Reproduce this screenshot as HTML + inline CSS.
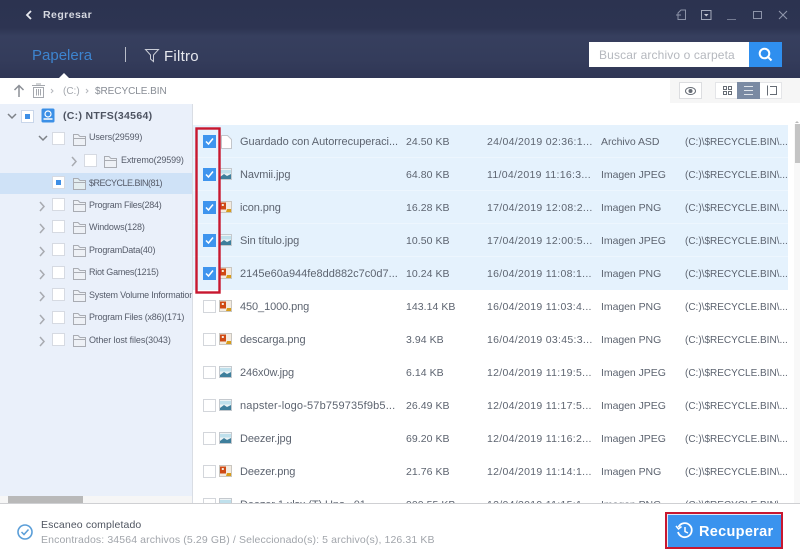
<!DOCTYPE html>
<html lang="es"><head><meta charset="utf-8"><title>Papelera</title>
<style>
html,body{margin:0;padding:0}
body{width:800px;height:556px;overflow:hidden;background:#fff;position:relative;font-family:"Liberation Sans",sans-serif;font-size:11px;color:#5d6470}
.a{position:absolute;white-space:nowrap}
svg{position:absolute;overflow:visible}
.t{position:absolute;white-space:nowrap;line-height:14px;filter:blur(.25px)}
.n{left:240px;letter-spacing:-.1px}
.s{left:406px;font-size:10.5px;letter-spacing:.05px}
.d{left:487px;font-size:10.5px;letter-spacing:.3px}
.k{left:601px;font-size:10.5px;letter-spacing:-.05px}
.p{left:685px;font-size:10px;letter-spacing:0;margin-top:1px}
.row{position:absolute;left:193px;width:595px;height:32px}
.sel{background:#e5f2fd}
.cb{position:absolute;width:11px;height:11px;border:1px solid #d3d6db;background:#fff}
.ck{position:absolute;left:203px;width:13px;height:13px;background:#3d94ee}
.tc{position:absolute;width:11px;height:11px;border:1px solid #d6dae2;background:#fff}
.tt{position:absolute;white-space:nowrap;font-size:9px;line-height:13px;color:#565c6a;letter-spacing:-.18px;filter:blur(.2px)}
</style></head><body>

<div class="a" style="left:0;top:0;width:800px;height:78px;background:linear-gradient(#2c3350 0,#2d3452 28px,#363f5e 36px,#343c5b 60px,#2f3655 78px)"></div>
<svg style="left:0;top:0" width="800" height="78" fill="none" stroke="#cfd3dc" stroke-width="1.2">
<path d="M31 11 L27 15 L31 19" stroke="#e8eaf0" stroke-width="1.8"/>
<path d="M125.500 47 V62" stroke="#b9bdc9" stroke-width="1"/>
<path d="M145.500 49.500 H158.500 L153.500 55 V61.500 L150.500 59 V55 Z" stroke="#c9ccd6" stroke-width="1"/>
<path d="M59 78 L64 73 L69 78 Z" fill="#fff" stroke="none"/>
<path d="M678 13 L681 10 H685.500 V19.500 H678 Z M676 15 H681" stroke="#8c93a8" stroke-width="1"/>
<path d="M701.500 10.500 H711 V19.500 H701.500 Z" stroke="#a2a8b9" stroke-width="1"/>
<path d="M704 14 H708.500 L706.250 16.500 Z" fill="#c7cad5" stroke="none"/>
<path d="M727 19.500 H736" stroke="#747b92" stroke-width="1"/>
<path d="M753.500 11.500 H761.500 V18.500 H753.500 Z" stroke="#8c93a8" stroke-width="1"/>
<path d="M779 11 L787 19 M787 11 L779 19" stroke="#8f96ab" stroke-width="1.1"/>
</svg>
<div class="t" style="left:43px;top:8px;font-size:10.500px;font-weight:bold;color:#d6d9e1;letter-spacing:.45px">Regresar</div>
<div class="t" style="left:32px;top:47px;font-size:15px;line-height:18px;color:#3d84cf;letter-spacing:0">Papelera</div>
<div class="t" style="left:164px;top:48px;font-size:15px;line-height:18px;color:#e6e8ee;letter-spacing:.25px">Filtro</div>
<div class="a" style="left:589px;top:42px;width:160px;height:25px;background:#fff"></div>
<div class="t" style="left:599px;top:48px;font-size:12px;color:#b5b8be;letter-spacing:.13px">Buscar archivo o carpeta</div>
<div class="a" style="left:749px;top:42px;width:33px;height:25px;background:#2f8fef"></div>
<svg style="left:749px;top:42px" width="33" height="25" fill="none" stroke="#fff" stroke-width="2"><circle cx="15.500" cy="11.500" r="4.800"/><path d="M19 15 L22.500 18.500"/></svg>

<!-- toolbar -->
<div class="a" style="left:670px;top:78px;width:130px;height:25px;background:#f6f6f6"></div>
<svg style="left:0;top:78px" width="200" height="26" fill="none" stroke="#8b8f96">
<path d="M19 19 V8 M14.500 12 L19 7.500 L23.500 12" stroke-width="1.500"/>
<path d="M33.500 9.500 H43.500 V19.500 H33.500 Z M32 7.500 H45 M36 6 H41 M36.500 11 V17.500 M38.500 11 V17.500 M40.500 11 V17.500" stroke="#a5a8ae" stroke-width="1"/>
<path d="M51 11 L53 13 L51 15 M86 11 L88 13 L86 15" stroke="#b5b8bd" stroke-width="1"/>
</svg>
<div class="t" style="left:63px;top:85px;font-size:10px;color:#a3a7ad">(C:)</div>
<div class="t" style="left:95px;top:85px;font-size:10px;color:#878c94;letter-spacing:-.05px">$RECYCLE.BIN</div>
<div class="a" style="left:679px;top:82px;background:#fff;border:1px solid #dcdde0;box-sizing:content-box;width:21px;height:15px"></div>
<div class="a" style="left:715px;top:82px;width:67px;height:17px;background:#fff;border:1px solid #e4e5e8;box-sizing:border-box"></div>
<div class="a" style="left:737px;top:82px;width:23px;height:17px;background:#7a8aa3"></div>
<svg style="left:670px;top:78px" width="130" height="25" fill="none" stroke="#666c75" stroke-width="1">
<ellipse cx="20.500" cy="13" rx="5" ry="3.500"/><circle cx="20.500" cy="13" r="1.500" fill="#666c75"/>
<path d="M53.500 8.500 H56.500 V11.500 H53.500 Z M58.500 8.500 H61.500 V11.500 H58.500 Z M53.500 13.500 H56.500 V16.500 H53.500 Z M58.500 13.500 H61.500 V16.500 H58.500 Z"/>
<path d="M74 8.500 H83 M74 12.500 H83 M74 16.500 H83" stroke="#dfe4ea"/>
<path d="M97.500 7.500 V17.500 M100 8.500 H106.500 V16.500 H100"/>
</svg>
<svg style="left:794px;top:118px" width="6" height="6"><path d="M1 5 L3 3 L5 5Z" fill="#b9b9b9"/></svg>

<!-- left tree -->
<div class="a" style="left:0;top:104px;width:192px;height:392px;background:#eaf0fa"></div>
<div class="a" style="left:192px;top:104px;width:1px;height:399px;background:#d9dde4"></div>
<div class="a" style="left:0;top:173px;width:192px;height:21px;background:#cfe2f7"></div>

<div class="tc" style="left:21px;top:110px;border-color:#c9d6ea"></div><div class="a" style="left:25px;top:114px;width:5px;height:5px;background:#3d8ee6"></div>
<div class="tc" style="left:52px;top:132px"></div>
<div class="tc" style="left:84px;top:154px"></div>
<div class="tc" style="left:52px;top:176px"></div><div class="a" style="left:56px;top:180px;width:5px;height:5px;background:#3d8ee6"></div>
<div class="tc" style="left:52px;top:198px"></div>
<div class="tc" style="left:52px;top:220px"></div>
<div class="tc" style="left:52px;top:243px"></div>
<div class="tc" style="left:52px;top:266px"></div>
<div class="tc" style="left:52px;top:288px"></div>
<div class="tc" style="left:52px;top:311px"></div>
<div class="tc" style="left:52px;top:333px"></div>

<svg style="left:0;top:0" width="193" height="360" fill="none" stroke="#7d8187" stroke-width="1.500">
<path d="M8 114 L12 118 L16 114 M39 136 L43 140 L47 136"/>
<g stroke="#a8abb1"><path d="M72 157 L76 161.500 L72 166"/>
<path d="M40 202 L44 206.500 L40 211 M40 224 L44 228.500 L40 233 M40 247 L44 251.500 L40 256 M40 270 L44 274.500 L40 279 M40 292 L44 296.500 L40 301 M40 315 L44 319.500 L40 324 M40 337 L44 341.500 L40 346"/></g>
<defs><g id="fd"><path d="M.5 12.500 V1.500 H5 L7 3.500 H12.500 V12.500 Z M.5 5.500 H12.500" stroke="#a9acb3" stroke-width="1"/></g></defs>
<use href="#fd" x="73" y="133" fill="#eef1f6"/>
<use href="#fd" x="104" y="155" fill="#eef1f6"/>
<use href="#fd" x="73" y="177" fill="#e3edf0"/>
<use href="#fd" x="73" y="199" fill="#eef1f6"/>
<use href="#fd" x="73" y="221" fill="#eef1f6"/>
<use href="#fd" x="73" y="244" fill="#eef1f6"/>
<use href="#fd" x="73" y="267" fill="#eef1f6"/>
<use href="#fd" x="73" y="289" fill="#eef1f6"/>
<use href="#fd" x="73" y="312" fill="#eef1f6"/>
<use href="#fd" x="73" y="334" fill="#eef1f6"/>
</svg>
<svg style="left:41px;top:108px" width="15" height="16" fill="none"><rect x="0.500" y="0.500" width="13" height="14" rx="1.500" fill="#3b8fe6"/><circle cx="7" cy="6" r="3" stroke="#fff" stroke-width="1.200"/><path d="M2.500 11 H11.500" stroke="#fff" stroke-width="1.500"/></svg>
<div class="tt" style="left:63px;top:110px;font-weight:bold;color:#4d5361;font-size:10.500px;letter-spacing:.3px">(C:) NTFS(34564)</div>
<div class="tt" style="left:89px;top:131px;letter-spacing:-.1px">Users(29599)</div>
<div class="tt" style="left:121px;top:154px;letter-spacing:-.13px">Extremo(29599)</div>
<div class="tt" style="left:89px;top:177px;letter-spacing:-.5px">$RECYCLE.BIN(81)</div>
<div class="tt" style="left:89px;top:199px;letter-spacing:-.25px">Program Files(284)</div>
<div class="tt" style="left:89px;top:221px;letter-spacing:-.15px">Windows(128)</div>
<div class="tt" style="left:89px;top:244px;letter-spacing:-.22px">ProgramData(40)</div>
<div class="tt" style="left:89px;top:266px;letter-spacing:-.24px">Riot Games(1215)</div>
<div class="tt" style="left:89px;top:289px;width:103px;overflow:hidden;letter-spacing:-.2px">System Volume Information</div>
<div class="tt" style="left:89px;top:311px;letter-spacing:-.2px">Program Files (x86)(171)</div>
<div class="tt" style="left:89px;top:334px;letter-spacing:-.08px">Other lost files(3043)</div>

<!-- list rows -->
<div class="row sel" style="top:125px;height:165px"></div>
<div class="a" style="left:193px;top:157px;width:595px;height:1px;background:#edf6fe"></div>
<div class="a" style="left:193px;top:190px;width:595px;height:1px;background:#edf6fe"></div>
<div class="a" style="left:193px;top:223px;width:595px;height:1px;background:#edf6fe"></div>
<div class="a" style="left:193px;top:256px;width:595px;height:1px;background:#edf6fe"></div>

<div class="ck" style="top:135px"></div><div class="ck" style="top:168px"></div><div class="ck" style="top:201px"></div><div class="ck" style="top:234px"></div><div class="ck" style="top:267px"></div>
<svg style="left:0;top:0" width="800" height="556" fill="none">
<g stroke="#fff" stroke-width="1.500"><path d="M206 141.500 L208.500 144 L213 138.500"/><path d="M206 174.500 L208.500 177 L213 171.500"/><path d="M206 207.500 L208.500 210 L213 204.500"/><path d="M206 240.500 L208.500 243 L213 237.500"/><path d="M206 273.500 L208.500 276 L213 270.500"/></g>
<path d="M221.500 135.500 H227.500 L231.500 139.500 V148.500 H221.500 Z" stroke="#c3c6cb" fill="#fff"/>
<defs>
<g id="jp"><rect x=".5" y=".5" width="12" height="11" fill="#eef3f5" stroke="#c4c9ce"/><path d="M1 9 L5 6 L8 8 L12 6 V11 H1 Z" fill="#3e7f9c"/><rect x="1" y="2" width="11" height="3.500" fill="#bfe0ec"/></g>
<g id="pn"><rect x=".5" y=".5" width="12" height="11" fill="#f3ebe0" stroke="#c9c6c0"/><rect x="1" y="1.500" width="6" height="7" fill="#cf4a14"/><rect x="2.800" y="3" width="2" height="2" fill="#f3ebe0"/><path d="M8 8 L12 8 L12 11 L7 11 Z" fill="#d89c1a"/></g>
</defs>
<use href="#jp" x="219" y="168"/>
<use href="#pn" x="219" y="201"/>
<use href="#jp" x="219" y="234"/>
<use href="#pn" x="219" y="267"/>
<use href="#pn" x="219" y="300"/>
<use href="#pn" x="219" y="333"/>
<use href="#jp" x="219" y="366"/>
<use href="#jp" x="219" y="399"/>
<use href="#jp" x="219" y="432"/>
<use href="#pn" x="219" y="465"/>
<use href="#jp" x="219" y="498"/>
<rect x="196.500" y="128.500" width="23" height="164" stroke="#c8172f" stroke-width="2.400"/>
</svg>

<div class="cb" style="left:203px;top:300px"></div>
<div class="cb" style="left:203px;top:333px"></div>
<div class="cb" style="left:203px;top:366px"></div>
<div class="cb" style="left:203px;top:399px"></div>
<div class="cb" style="left:203px;top:432px"></div>
<div class="cb" style="left:203px;top:465px"></div>
<div class="cb" style="left:203px;top:498px"></div>

<div class="t n" style="top:135px;letter-spacing:-.03px">Guardado con Autorrecuperaci...</div><div class="t s" style="top:135px">24.50 KB</div><div class="t d" style="top:135px">24/04/2019 02:36:1...</div><div class="t k" style="top:135px">Archivo ASD</div><div class="t p" style="top:135px">(C:)\$RECYCLE.BIN\...</div>
<div class="t n" style="top:168px">Navmii.jpg</div><div class="t s" style="top:168px">64.80 KB</div><div class="t d" style="top:168px">11/04/2019 11:16:3...</div><div class="t k" style="top:168px">Imagen JPEG</div><div class="t p" style="top:168px">(C:)\$RECYCLE.BIN\...</div>
<div class="t n" style="top:201px">icon.png</div><div class="t s" style="top:201px">16.28 KB</div><div class="t d" style="top:201px">17/04/2019 12:08:2...</div><div class="t k" style="top:201px">Imagen PNG</div><div class="t p" style="top:201px">(C:)\$RECYCLE.BIN\...</div>
<div class="t n" style="top:234px">Sin título.jpg</div><div class="t s" style="top:234px">10.50 KB</div><div class="t d" style="top:234px">17/04/2019 12:00:5...</div><div class="t k" style="top:234px">Imagen JPEG</div><div class="t p" style="top:234px">(C:)\$RECYCLE.BIN\...</div>
<div class="t n" style="top:267px;letter-spacing:0">2145e60a944fe8dd882c7c0d7...</div><div class="t s" style="top:267px">10.24 KB</div><div class="t d" style="top:267px">16/04/2019 11:08:1...</div><div class="t k" style="top:267px">Imagen PNG</div><div class="t p" style="top:267px">(C:)\$RECYCLE.BIN\...</div>
<div class="t n" style="top:300px">450_1000.png</div><div class="t s" style="top:300px">143.14 KB</div><div class="t d" style="top:300px">16/04/2019 11:03:4...</div><div class="t k" style="top:300px">Imagen PNG</div><div class="t p" style="top:300px">(C:)\$RECYCLE.BIN\...</div>
<div class="t n" style="top:333px">descarga.png</div><div class="t s" style="top:333px">3.94 KB</div><div class="t d" style="top:333px">16/04/2019 03:45:3...</div><div class="t k" style="top:333px">Imagen PNG</div><div class="t p" style="top:333px">(C:)\$RECYCLE.BIN\...</div>
<div class="t n" style="top:366px">246x0w.jpg</div><div class="t s" style="top:366px">6.14 KB</div><div class="t d" style="top:366px">12/04/2019 11:19:5...</div><div class="t k" style="top:366px">Imagen JPEG</div><div class="t p" style="top:366px">(C:)\$RECYCLE.BIN\...</div>
<div class="t n" style="top:399px;letter-spacing:.17px">napster-logo-57b759735f9b5...</div><div class="t s" style="top:399px">26.49 KB</div><div class="t d" style="top:399px">12/04/2019 11:17:5...</div><div class="t k" style="top:399px">Imagen JPEG</div><div class="t p" style="top:399px">(C:)\$RECYCLE.BIN\...</div>
<div class="t n" style="top:432px">Deezer.jpg</div><div class="t s" style="top:432px">69.20 KB</div><div class="t d" style="top:432px">12/04/2019 11:16:2...</div><div class="t k" style="top:432px">Imagen JPEG</div><div class="t p" style="top:432px">(C:)\$RECYCLE.BIN\...</div>
<div class="t n" style="top:465px">Deezer.png</div><div class="t s" style="top:465px">21.76 KB</div><div class="t d" style="top:465px">12/04/2019 11:14:1...</div><div class="t k" style="top:465px">Imagen PNG</div><div class="t p" style="top:465px">(C:)\$RECYCLE.BIN\...</div>
<div class="t n" style="top:498px">Deezer 1.xlsx (T) Uno...01...</div><div class="t s" style="top:498px">900.55 KB</div><div class="t d" style="top:498px">12/04/2019 11:15:1...</div><div class="t k" style="top:498px">Imagen PNG</div><div class="t p" style="top:498px">(C:)\$RECYCLE.BIN\...</div>

<!-- scrollbars -->
<div class="a" style="left:794px;top:124px;width:6px;height:379px;background:#f8f8f8"></div>
<div class="a" style="left:795px;top:124px;width:5px;height:39px;background:#c4c4c4"></div>
<div class="a" style="left:0;top:496px;width:192px;height:7px;background:#f6f6f6"></div>
<div class="a" style="left:8px;top:496px;width:75px;height:7px;background:#b9b9b9"></div>

<!-- footer -->
<div class="a" style="left:0;top:504px;width:800px;height:52px;background:#fff"></div>
<div class="a" style="left:0;top:503px;width:800px;height:1px;background:#cfd0d3"></div>
<svg style="left:16px;top:523px" width="18" height="18" fill="none"><circle cx="9" cy="9" r="7" stroke="#5a9ed8" stroke-width="1.600"/><path d="M5.500 9 L8 11.500 L12.500 6.500" stroke="#5a9ed8" stroke-width="1.500"/></svg>
<div class="t" style="left:41px;top:518px;font-size:10.500px;color:#4f5560;letter-spacing:.13px">Escaneo completado</div>
<div class="t" style="left:41px;top:533px;font-size:10.500px;color:#a1a5ab;letter-spacing:.12px">Encontrados: 34564 archivos (5.29 GB) / Seleccionado(s): 5 archivo(s), 126.31 KB</div>

<div class="a" style="left:665px;top:512px;width:118px;height:37px;background:#3a93ee;border:2px solid #c8172f;box-sizing:border-box;box-shadow:inset 1px 1px 0 #dbe9f7"></div>
<svg style="left:675px;top:521px" width="20" height="20" fill="none" stroke="#fff" stroke-width="1.800"><path d="M3.500 6 A7 7 0 1 1 3 11"/><path d="M1 5 L3.500 8 L6.500 5.500" stroke-width="1.500"/><path d="M10 6 V10.500 L13 12" stroke-width="1.500"/></svg>
<div class="t" style="left:699px;top:523px;font-size:14.500px;line-height:18px;font-weight:bold;color:#fff;letter-spacing:.3px">Recuperar</div>
</body></html>
